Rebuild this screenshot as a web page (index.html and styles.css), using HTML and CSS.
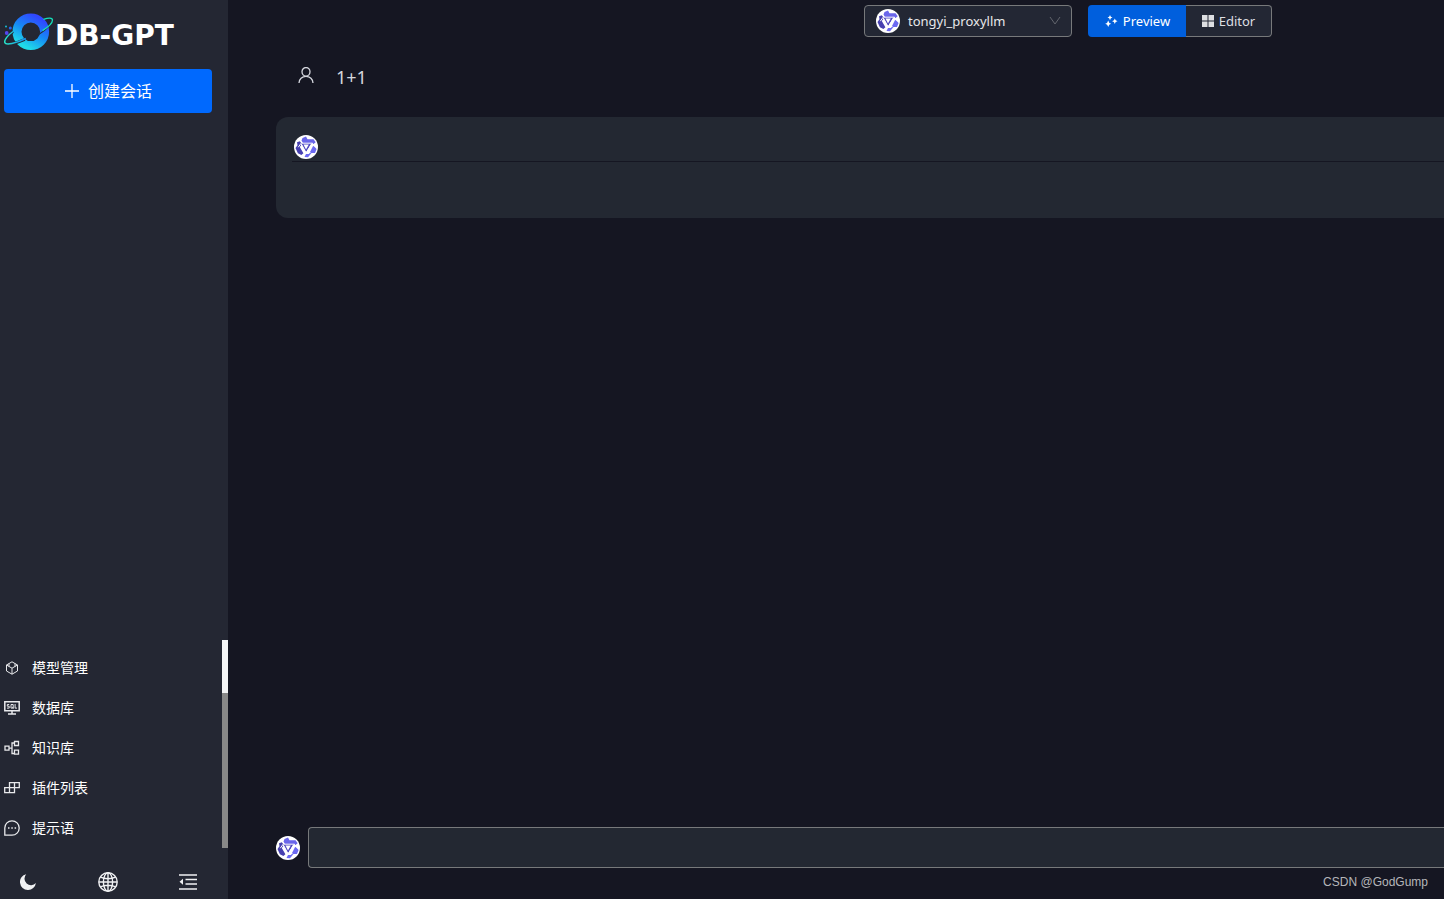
FILE: index.html
```html
<!DOCTYPE html>
<html lang="zh-CN">
<head>
<meta charset="utf-8">
<title>DB-GPT</title>
<link rel="stylesheet" href="styles.css">
</head>
<body>
<svg class="sprite" aria-hidden="true">
  <symbol id="model-avatar" viewBox="0 0 24 24">
    <circle cx="12" cy="12" r="12" fill="#fff"/>
    <path d="M8.500 3 12 1.500l1.500 2.700h6l2.200 3-2.200 1.700H9.500L7.500 5.500Z" fill="#6a66ea"/>
    <path d="M3 7.200 6 6.300l1.800 3L5.800 12l3.600 6.300-2 1.700-3.500-1.800L1.500 13l2-2.700Z" fill="#4740b0"/>
    <path d="M19.300 10.500 22.600 14l-1.600 4h-3.500L14 22.300l-3.500-.4 1.500-3h3Z" fill="#6c69f2"/>
    <path d="M7 8h10.500L12 17.500Z" fill="#4f48c0"/>
    <path d="M9.500 9.600h5.300L12 14.500Z" fill="#fff"/>
    <path d="M6.200 5.200 8 8.200h10.500M4.300 12.200l2.700-3.800 5 9.200h4.500M12 17.800l6.300-9.600 2 3.300" fill="none" stroke="#fff" stroke-width="1"/>
  </symbol>
</svg>
<div class="app">
  <aside class="sidebar">
    <a class="logo" href="#" aria-label="DB-GPT">
      <svg class="logo-mark" viewBox="0 0 50 40" aria-hidden="true">
        <defs>
          <linearGradient id="ring" x1="0.8" y1="0" x2="0.25" y2="1">
            <stop offset="0" stop-color="#3047ff"/><stop offset=".5" stop-color="#168af5"/><stop offset="1" stop-color="#20dbe8"/>
          </linearGradient>
          <linearGradient id="tail" x1="0" y1="0" x2="1" y2="0">
            <stop offset="0" stop-color="#27e2c5"/><stop offset="1" stop-color="#168cf0"/>
          </linearGradient>
        </defs>
        <circle cx="26.800" cy="19.800" r="13.800" fill="none" stroke="url(#ring)" stroke-width="9"/>
        <path d="M44 15c-3 4-9 7-16 12" fill="none" stroke="#242733" stroke-width="1.200"/>
        <path d="M9 19.500C4 23 0 28 .8 30.500c1 3 10 1.500 20-3" fill="none" stroke="#242733" stroke-width="3"/>
        <path d="M9 19.500C4 23 0 28 .8 30.500c1 3 11 1 21-4" fill="none" stroke="url(#tail)" stroke-width="1.500"/>
        <path d="M39.500 7.400c5-1.800 9-2 9 .7 0 3.500-5 7.500-10 10.500" fill="none" stroke="#15dfb9" stroke-width="1.300"/>
        <circle cx="2.700" cy="21" r="1.900" fill="#5545ed"/><circle cx="6.300" cy="16" r="1.500" fill="#2464ef"/><circle cx="2" cy="14.500" r="1" fill="#16bfd5"/>
      </svg>
      <span class="logo-text">DB-GPT</span>
    </a>
    <button class="create" type="button">
      <svg width="16" height="16" viewBox="0 0 16 16" aria-hidden="true"><path d="M8 1v14M1 8h14" stroke="currentColor" stroke-width="1.300"/></svg>
      <span>创建会话</span>
    </button>
    <div class="menu-area">
      <nav class="menu">
        <a href="#"><svg viewBox="0 0 16 16"><path d="M8 1.800 13.500 5v6L8 14.200 2.500 11V5ZM2.500 5 8 8.200 13.500 5M8 8.200v6M5 6.500v-3M11 6.500v-3"/></svg>模型管理</a>
        <a href="#"><svg viewBox="0 0 16 16"><path d="M.8 1.800h14.400v9H.8ZM8 11v3M4 14h8" stroke-width="1.500"/><path d="M5.200 4.500H3.300v1.700h1.900v1.900H3M7 4.500h2.200v3.600H7ZM8.400 7l1.300 1.600M11.100 4v4.100H13"/></svg>数据库</a>
        <a href="#"><svg viewBox="0 0 16 16"><path d="M1 6.200h4v4H1ZM5 8.200h3M10.500 3H8v10.500h2.500M10.500 1.500h4v4h-4ZM10.500 10.200h4v4h-4Z" stroke-width="1.300"/></svg>知识库</a>
        <a href="#"><svg viewBox="0 0 16 16"><path d="M5.500 2.600h9.800v5H5.500ZM.7 7.600h9.800v5H.7ZM10.500 2.600v5M5.500 7.600v5" stroke-width="1.300"/></svg>插件列表</a>
        <a href="#"><svg viewBox="0 0 16 16"><path d="M.8 15.200V8A7.200 7.200 0 1 1 8 15.200Z" stroke-width="1.300"/><path d="M4 8h1.500M7.300 8h1.500M10.600 8h1.500" stroke-width="1.500"/></svg>提示语</a>
      </nav>
      <div class="scrollbar"><div class="thumb"></div></div>
    </div>
    <div class="tools">
      <button type="button" aria-label="主题"><svg width="16" height="16" viewBox="0 0 16 16"><path d="M6.200.2A8 8 0 1 0 15.900 9 5.300 5.300 0 1 1 6.200.2Z" fill="currentColor"/></svg></button>
      <button type="button" aria-label="语言"><svg width="20" height="20" viewBox="0 0 20 20" fill="none" stroke="currentColor" stroke-width="1.400"><circle cx="10" cy="10" r="9.200"/><ellipse cx="10" cy="10" rx="4.600" ry="9.200"/><path d="M10 1v18M1 10h18M2.500 5.200c4 2 11 2 15 0M2.500 14.800c4-2 11-2 15 0"/></svg></button>
      <button type="button" aria-label="收起"><svg width="18" height="16" viewBox="0 0 18 16"><path d="M0 1h18M6.500 5.500H18M6.500 10H18M0 15h18" stroke="currentColor" stroke-width="1.600"/><path d="M4 4.800v6L.5 7.800Z" fill="currentColor"/></svg></button>
    </div>
  </aside>
  <main class="main">
    <header class="topbar">
      <button class="model" type="button" aria-haspopup="listbox">
        <svg class="avatar" aria-hidden="true"><use href="#model-avatar"/></svg>
        <span class="model-name">tongyi_proxyllm</span>
        <svg width="12" height="12" viewBox="0 0 12 12" aria-hidden="true"><path d="m1 2 5 7 5-7" fill="none" stroke="#62656d"/></svg>
      </button>
      <div class="modes">
        <button class="mode active" type="button"><svg width="14" height="14" viewBox="0 0 14 14" aria-hidden="true"><path d="M6 1q.4 2.200 2.500 2.600Q6.400 4 6 6.200 5.600 4 3.500 3.600 5.600 3.200 6 1ZM10.800 4.500q.4 2.200 2.700 2.700-2.300.4-2.700 2.700-.4-2.300-2.700-2.700 2.300-.5 2.700-2.700ZM4.200 6.600q.5 2.700 3 3.200-2.500.5-3 3.200-.5-2.700-3-3.200 2.500-.5 3-3.200Z" fill="currentColor"/></svg>Preview</button>
        <button class="mode" type="button"><svg width="12" height="12" viewBox="0 0 12 12" aria-hidden="true"><path d="M0 0h5.500v5.500H0ZM6.500 0H12v5.500H6.500ZM0 6.500h5.500V12H0ZM6.500 6.500H12V12H6.500Z" fill="currentColor"/></svg>Editor</button>
      </div>
    </header>
    <section class="chat">
      <div class="question">
        <svg width="16" height="16" viewBox="0 0 16 16" aria-hidden="true"><path d="M1 16a7 6.600 0 0 1 14 0M12 4.800a4 4.300 0 1 1-8 0 4 4.300 0 0 1 8 0Z" fill="none" stroke="currentColor" stroke-width="1.300"/></svg>
        <span>1+1</span>
      </div>
      <article class="answer">
        <div class="answer-head"><svg class="avatar" aria-hidden="true"><use href="#model-avatar"/></svg></div>
      </article>
    </section>
    <form class="composer">
      <svg class="avatar" aria-hidden="true"><use href="#model-avatar"/></svg>
      <input type="text" aria-label="消息">
    </form>
    <footer class="credit">CSDN @GodGump</footer>
  </main>
</div>
</body>
</html>
```
FILE: styles.css
```css
* { box-sizing: border-box; }
body {
  margin: 0;
  background: #151622;
  color: #fff;
  font: 14px/20px "Noto Sans", "Noto Sans CJK SC", sans-serif;
}
button, input { margin: 0; font: inherit; color: inherit; }
button { cursor: pointer; }
a { color: inherit; text-decoration: none; }
svg { display: block; flex-shrink: 0; }
.sprite { position: absolute; width: 0; height: 0; }
.app { display: flex; height: 100vh; overflow: hidden; }

.sidebar { display: flex; flex-direction: column; flex: 0 0 228px; background: #242733; }
.logo { display: flex; align-items: center; gap: 1px; height: 69px; padding: 0 4px 5px; }
.logo-mark { width: 50px; height: 40px; }
.logo-text { padding-top: 8px; font: bold 28px/28px "DejaVu Sans", sans-serif; }
.create {
  display: flex; align-items: center; justify-content: center; gap: 8px;
  height: 44px; margin: 0 16px 0 4px; padding: 0;
  border: 0; border-radius: 4px; background: #0069fe;
  font-size: 16px; line-height: 24px;
}
.menu-area { display: flex; height: 208px; margin-top: auto; }
.menu { flex: 1; padding-top: 8px; }
.menu a { display: flex; align-items: center; gap: 12px; height: 40px; padding-left: 4px; }
.menu svg { width: 16px; height: 16px; fill: none; stroke: #e8e9ec; stroke-width: 1; }
.scrollbar { width: 6px; background: #888; }
.thumb { height: 53px; background: #f4f5f6; }
.tools { display: flex; height: 51px; padding: 14px 0 0 8px; gap: 40px; }
.tools button {
  display: grid; place-items: center; width: 40px; height: 40px;
  padding: 0; border: 0; background: none; color: #f0f1f3;
}

.main { display: flex; flex-direction: column; flex: 1; min-width: 0; }
.topbar { display: flex; justify-content: flex-end; gap: 16px; padding: 5px 172px 0 48px; font-size: 13px; }
.model {
  display: flex; align-items: center; gap: 8px; width: 208px; height: 32px;
  padding: 0 10px 0 11px; border: 1px solid #77797b; border-radius: 4px;
  background: #232734; color: #e7e8ea; text-align: left;
}
.model-name { flex: 1; }
.avatar { width: 24px; height: 24px; }
.modes { display: flex; }
.mode {
  display: flex; align-items: center; justify-content: center; gap: 5px;
  width: 86px; height: 32px; padding: 0;
  border: 1px solid #77797b; border-left: 0; border-radius: 0 4px 4px 0;
  background: #232734; color: #dedfe2;
}
.mode.active { width: 98px; border: 0; border-radius: 4px 0 0 4px; background: #005fdd; color: #fff; }
.chat { flex: 1; padding: 24px 0 0 48px; }
.question { display: flex; align-items: center; gap: 22px; height: 32px; padding-left: 22px; color: #d5d7de; font-size: 18px; }
.question svg { margin-bottom: 4px; }
.answer { height: 101px; margin-top: 24px; padding: 16px 0 0 16px; border-radius: 12px 0 0 12px; background: #232832; }
.answer-head { height: 29px; padding: 2px; border-bottom: 1px solid #151622; }
.composer { display: flex; align-items: center; gap: 8px; padding-left: 48px; }
.composer input {
  flex: 1; min-width: 0; height: 41px; padding: 0 12px;
  border: 1px solid #77797b; border-right: 0; border-radius: 4px 0 0 4px;
  background: #232832; outline: 0;
}
.credit {
  height: 31px; padding: 4px 16px 0 0; text-align: right;
  color: #b5b6ba; font: 12px/20px "Liberation Sans", sans-serif;
}
```
